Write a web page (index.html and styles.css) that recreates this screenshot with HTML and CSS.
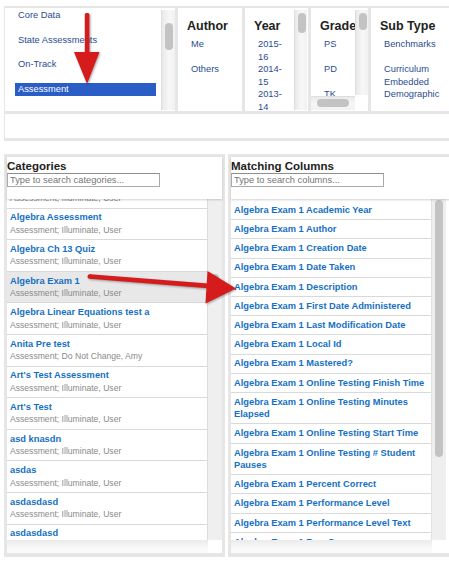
FILE: index.html
```html
<!DOCTYPE html>
<html>
<head>
<meta charset="utf-8">
<link rel="stylesheet" href="styles.css">
</head>
<body>
<section class="filters">
  <div class="filter-row">
    <div class="col col-types">
      <ul class="types">
        <li>Core Data</li>
        <li>State Assessments</li>
        <li>On-Track</li>
        <li class="selected">Assessment</li>
      </ul>
      <div class="vtrack track-types"><span class="thumb thumb-types"></span></div>
    </div>
    <div class="col col-author">
      <div class="fcol">
        <h3>Author</h3>
        <ul class="opts"><li>Me</li><li>Others</li></ul>
      </div>
    </div>
    <div class="col col-year">
      <div class="fcol year-body">
        <h3>Year</h3>
        <ul class="opts narrow"><li>2015-<wbr>16</li><li>2014-<wbr>15</li><li>2013-<wbr>14</li></ul>
      </div>
      <div class="vtrack track-year"><span class="thumb thumb-year"></span></div>
    </div>
    <div class="col col-grade">
      <div class="fcol grade-body">
        <h3>Grade</h3>
        <ul class="opts"><li>PS</li><li>PD</li><li>TK</li></ul>
      </div>
      <div class="vtrack track-grade"><span class="thumb thumb-grade"></span></div>
      <div class="htrack"><span class="hthumb"></span></div>
      <div class="corner"></div>
    </div>
    <div class="col col-sub">
      <div class="fcol">
        <h3>Sub Type</h3>
        <ul class="opts"><li>Benchmarks</li><li>Curriculum Embedded</li><li>Demographic</li></ul>
      </div>
    </div>
  </div>
  <div class="filter-bar"></div>
</section>

<section class="pickers">
  <div class="panel">
    <div class="panel-head">
      <h2>Categories</h2>
      <input type="text" placeholder="Type to search categories...">
    </div>
    <div class="panel-list">
      <div class="list-view">
        <ul class="cats">
          <li><b>Algebra 2 Test</b><span>Assessment; Illuminate, User</span></li>
          <li><b>Algebra Assessment</b><span>Assessment; Illuminate, User</span></li>
          <li><b>Algebra Ch 13 Quiz</b><span>Assessment; Illuminate, User</span></li>
          <li class="hl"><b>Algebra Exam 1</b><span>Assessment; Illuminate, User</span></li>
          <li><b>Algebra Linear Equations test a</b><span>Assessment; Illuminate, User</span></li>
          <li><b>Anita Pre test</b><span>Assessment; Do Not Change, Amy</span></li>
          <li><b>Art's Test Assessment</b><span>Assessment; Illuminate, User</span></li>
          <li><b>Art's Test</b><span>Assessment; Illuminate, User</span></li>
          <li><b>asd knasdn</b><span>Assessment; Illuminate, User</span></li>
          <li><b>asdas</b><span>Assessment; Illuminate, User</span></li>
          <li><b>asdasdasd</b><span>Assessment; Illuminate, User</span></li>
          <li><b>asdasdasd</b><span>Assessment; Illuminate, User</span></li>
        </ul>
      </div>
      <div class="ltrack"><span class="thumb thumb-cats"></span></div>
    </div>
    <div class="panel-foot"><span class="foot-fill"></span><span class="foot-corner"></span></div>
  </div>

  <div class="panel panel-right">
    <div class="panel-head">
      <h2>Matching Columns</h2>
      <input type="text" placeholder="Type to search columns...">
    </div>
    <div class="panel-list">
      <div class="list-view">
        <ul class="cols">
          <li>Algebra Exam 1 Academic Year</li>
          <li>Algebra Exam 1 Author</li>
          <li>Algebra Exam 1 Creation Date</li>
          <li>Algebra Exam 1 Date Taken</li>
          <li>Algebra Exam 1 Description</li>
          <li>Algebra Exam 1 First Date Administered</li>
          <li>Algebra Exam 1 Last Modification Date</li>
          <li>Algebra Exam 1 Local Id</li>
          <li>Algebra Exam 1 Mastered?</li>
          <li>Algebra Exam 1 Online Testing Finish Time</li>
          <li>Algebra Exam 1 Online Testing Minutes Elapsed</li>
          <li>Algebra Exam 1 Online Testing Start Time</li>
          <li>Algebra Exam 1 Online Testing # Student Pauses</li>
          <li>Algebra Exam 1 Percent Correct</li>
          <li>Algebra Exam 1 Performance Level</li>
          <li>Algebra Exam 1 Performance Level Text</li>
          <li>Algebra Exam 1 Raw Score</li>
        </ul>
      </div>
      <div class="ltrack track-cols"><span class="thumb thumb-cols"></span></div>
    </div>
    <div class="panel-foot"><span class="foot-fill"></span><span class="foot-corner"></span></div>
  </div>
</section>

<svg class="arrows" width="449" height="561" viewBox="0 0 449 561" aria-hidden="true">
  <g class="arrow">
    <rect x="84.8" y="13" width="4.6" height="41" rx="1.5"/>
    <polygon points="74,52 99.5,52 87,84"/>
  </g>
  <g class="arrow">
    <polygon points="90,274.2 208,283.6 207.6,288.2 89.6,278.8"/>
    <circle cx="89.8" cy="276.5" r="2.3"/>
    <polygon points="207.5,271 236,288.5 205.5,303.5"/>
  </g>
</svg>
</body>
</html>
```

FILE: styles.css
```css
* { box-sizing: border-box; margin: 0; padding: 0; }
html, body { width: 449px; height: 561px; overflow: hidden; }
body {
  background: #fff;
  font-family: "Liberation Sans", Arial, Helvetica, sans-serif;
  color: #333;
  position: relative;
}
ul { list-style: none; }

/* ---------- top filter strip ---------- */
.filters {
  margin: 6px 0 0 4px;
  background: #e6e6e6;
  padding: 2px 0 3px 1px;
}
.filter-row { display: flex; gap: 3px; height: 103px; }
.col { background: #fff; overflow: hidden; position: relative; flex: none; }

.col-types { width: 170px; display: flex; }
.types {
  flex: 1;
  padding: 1px 5px 0 10px;
  font-size: 9.3px;
  color: #2a4c91;
}
.types li {
  height: 13px;
  line-height: 13px;
  padding-left: 3px;
  margin-bottom: 11.5px;
  white-space: nowrap;
}
.types li.selected { background: #2b5dc7; color: #fff; }

.vtrack {
  flex: none;
  width: 14px;
  margin: 2px 0 1px;
  background: linear-gradient(to right, #e9e9e9, #f7f7f7 55%, #f1f1f1);
  border-left: 1px solid #dedede;
  padding: 13px 0 0 3px;
}
.thumb { display: block; width: 8px; height: 27px; border-radius: 4px; background: #c3c3c3; }

.col-author { width: 64px; }
.col-year { width: 63px; display: flex; }
.year-body { width: 49px; flex: none; }
.track-year { width: 13px; padding-top: 3px; }
.thumb-year { height: 20px; }

.col-grade {
  width: 57px;
  display: grid;
  grid-template-columns: 44px 13px;
  grid-template-rows: 88px 14px 1px;
}
.grade-body { overflow: hidden; grid-column: 1; grid-row: 1; }
.track-grade { width: 13px; grid-column: 2; grid-row: 1; padding-top: 3px; }
.thumb-grade { height: 17px; }
.htrack {
  grid-column: 1; grid-row: 2;
  background: linear-gradient(to bottom, #eaeaea, #f7f7f7 55%, #f1f1f1);
  border-top: 1px solid #dedede;
  padding: 2px 0 0 6px;
}
.hthumb { display: block; width: 32px; height: 8px; border-radius: 4px; background: #c3c3c3; }
.corner { grid-column: 2; grid-row: 2; background: #fff; }

.col-sub { flex: 1; }

.fcol { padding: 9px 0 0 9px; }
.fcol h3 {
  font-size: 12.5px;
  font-weight: bold;
  line-height: 18px;
  color: #222;
  margin-bottom: 3px;
  white-space: nowrap;
}
.opts { padding-left: 4px; }
.opts li {
  font-size: 9.3px;
  line-height: 12.5px;
  min-height: 25px;
  color: #2a4c91;
}
.opts.narrow { padding-right: 6px; }

.filter-bar { margin-top: 3px; height: 24px; background: #fff; }

/* ---------- pickers ---------- */
.pickers { display: flex; gap: 3px; margin: 13px 0 0 4px; }
.panel {
  width: 221px;
  flex: none;
  background: #e6e6e6;
  padding: 3px 3px 4px;
}
.panel-right { width: 224px; padding-right: 0; }

.panel-head {
  position: relative;
  z-index: 1;
  height: 42px;
  background: #fff;
  padding-top: 3px;
  box-shadow: 0 1px 2px rgba(0, 0, 0, 0.18);
}
.panel-head h2 {
  font-size: 11.5px;
  font-weight: bold;
  line-height: 13px;
  color: #222;
}
.panel-head input {
  display: block;
  width: 153px;
  height: 14px;
  border: 1px solid #aaa;
  border-top-color: #8f8f8f;
  padding: 0 2px;
  font-family: "Liberation Sans", Arial, Helvetica, sans-serif;
  font-size: 9.3px;
  color: #333;
  background: #fff;
  outline: none;
}
.panel-head input::placeholder { color: #767676; }

.panel-list { display: flex; height: 341px; overflow: hidden; background: #fff; }
.list-view {
  width: 201px;
  flex: none;
  overflow: hidden;
  background: #fff;
  border-right: 1px solid #dcdcdc;
}
.ltrack {
  width: 14px;
  flex: none;
  background: #efefef;
  padding: 75px 0 0 3px;
}
.thumb-cats { height: 24px; }
.track-cols { border-left: 1px solid #e2e2e2; padding: 1px 0 0 3px; margin-left: -1px; width: 15px; }
.thumb-cols { height: 257px; }

.cats { margin-top: -22px; }
.cats li {
  padding: 2.9px 3px;
  border-bottom: 1px solid #d9d9d9;
}
.cats li.hl { background: #e8e8e8; }
.cats b {
  display: block;
  font-size: 9.3px;
  line-height: 12.4px;
  font-weight: bold;
  color: #1570c4;
  white-space: nowrap;
}
.cats span {
  display: block;
  font-size: 8.6px;
  line-height: 12.4px;
  color: #8a8a8a;
  white-space: nowrap;
}

.cols { padding-top: 2px; }
.cols li {
  padding: 2.9px 3px;
  border-bottom: 1px solid #d9d9d9;
  font-size: 9.3px;
  line-height: 12.4px;
  font-weight: bold;
  color: #1570c4;
}

.panel-foot { display: flex; height: 13px; }
.foot-fill { width: 201px; background: linear-gradient(to bottom, #ebebeb, #f8f8f8 60%, #fbfbfb); }
.foot-corner { flex: 1; background: #fff; }

/* ---------- annotation arrows ---------- */
.arrows {
  position: absolute;
  left: 0;
  top: 0;
  z-index: 10;
  pointer-events: none;
  filter: drop-shadow(1px 1.5px 1px rgba(0, 0, 0, 0.35));
}
.arrow { fill: #d51b1b; }
```
